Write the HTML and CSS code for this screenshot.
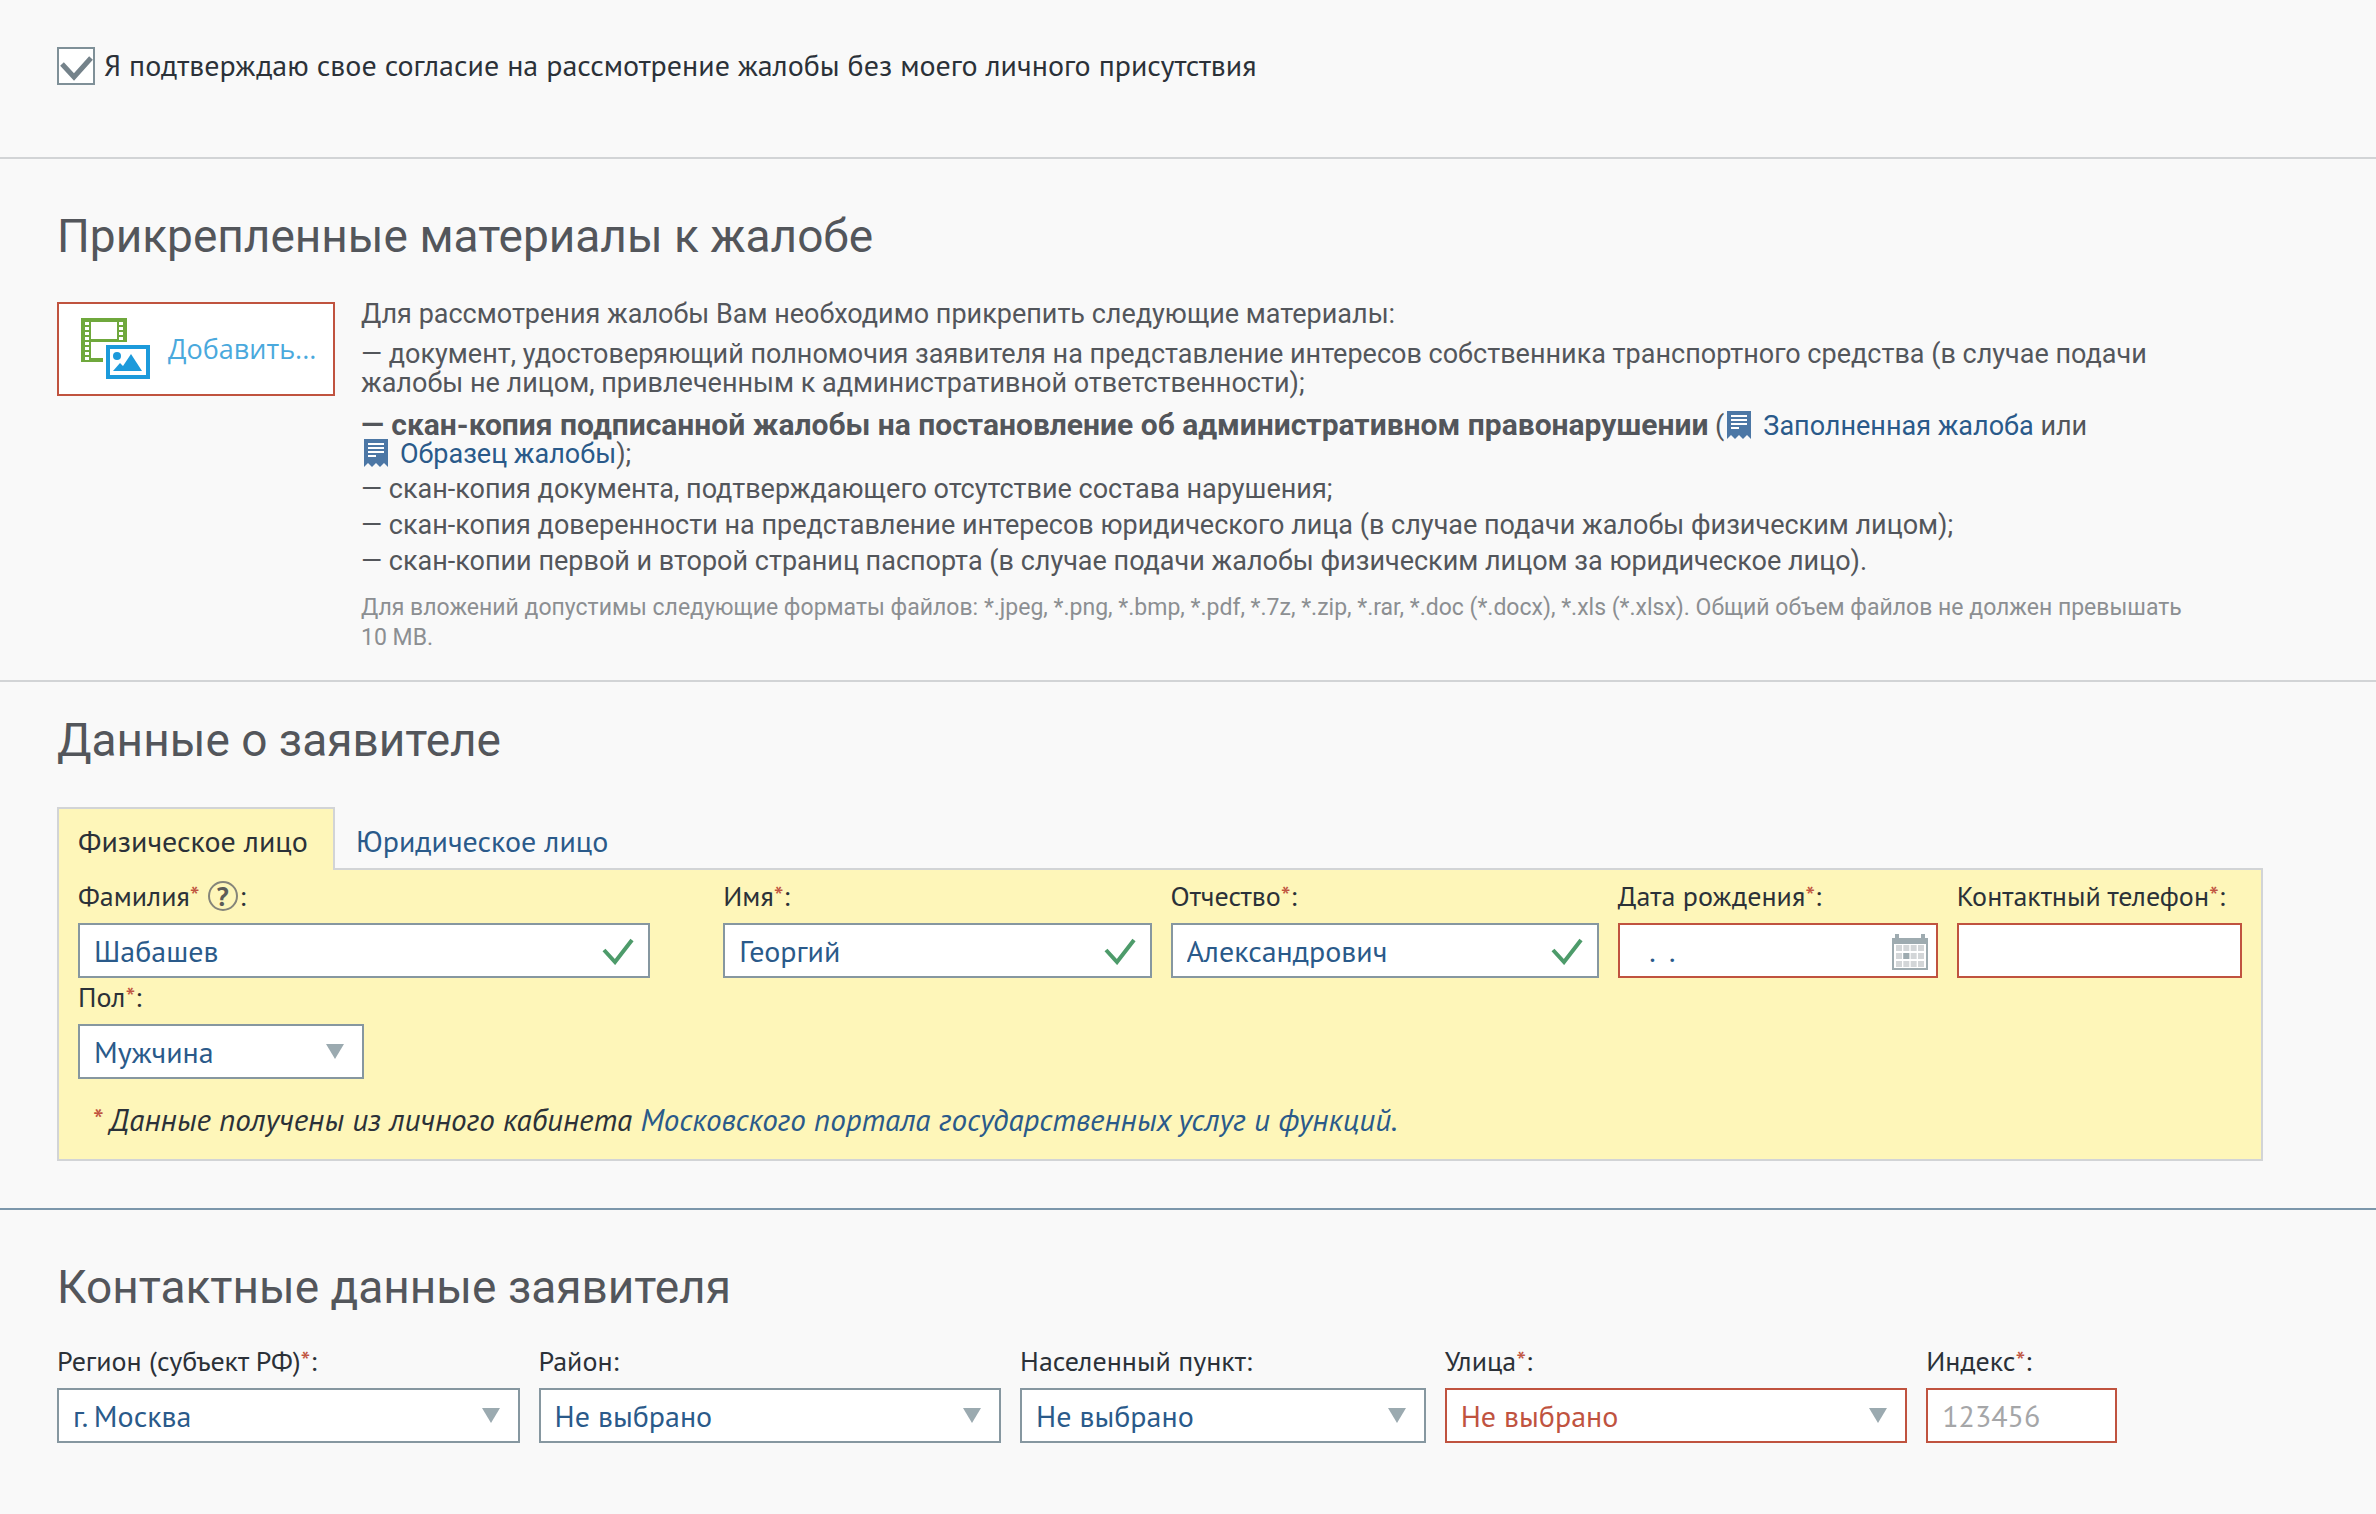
FILE: index.html
```html
<!DOCTYPE html>
<html lang="ru">
<head>
<meta charset="utf-8">
<meta name="viewport" content="width=device-width, initial-scale=1">
<title>Обжалование постановления</title>
<link rel="stylesheet" href="styles.css">
</head>
<body>
<svg class="sprite" aria-hidden="true">
  <symbol id="check" viewBox="0 0 32 28"><path d="M2 13 13 25 30 3" fill="none" stroke="currentColor" stroke-width="4"/></symbol>
  <symbol id="arrow" viewBox="0 0 18 15"><path d="M0 0H18L9 15Z" fill="currentColor"/></symbol>
  <symbol id="doc" viewBox="0 0 24 28">
    <path d="M0 0H24V28L20 24 16 28 12 24 8 28 4 24 0 28Z" fill="#4c77a5"/>
    <path d="M4 5H20M4 9H20M4 13H20M4 17H12" stroke="#fff" stroke-width="2"/>
  </symbol>
</svg>

<section class="section section-consent">
  <div class="consent">
    <span class="tick">
      <input class="tick-input" type="checkbox" id="consent" checked>
      <svg class="tick-mark" viewBox="0 0 38 38" aria-hidden="true"><path d="M5 17 17 30 34 11" fill="none" stroke="#74828a" stroke-width="5"/></svg>
    </span>
    <label for="consent">Я подтверждаю свое согласие на рассмотрение жалобы без моего личного присутствия</label>
  </div>
</section>

<section class="section section-files">
  <h2 class="title">Прикрепленные материалы к жалобе</h2>
  <div class="files">
    <button class="add" type="button">
      <svg class="add-icon" viewBox="0 0 69 62" aria-hidden="true">
        <path d="M0 0H46V26H24V44H0Z" fill="#6fa83c"/>
        <path d="M10 4H36V21H10ZM10 24H36V27H24V40H10Z" fill="#fff"/>
        <path d="M6 4V42M40 4V25" stroke="#fff" stroke-width="4" stroke-dasharray="3 2"/>
        <path d="M22 24H69V62H22Z" fill="#fff"/>
        <path d="M27 29H67V59H27Z" fill="#fff" stroke="#1c9adb" stroke-width="4"/>
        <circle cx="36" cy="38" r="4" fill="#1c9adb"/>
        <path d="M32 53 39 45 42 48 50 36 61 53Z" fill="#1c9adb"/>
      </svg>
      <span>Добавить...</span>
    </button>
    <div class="files-text">
      <p class="lead">Для рассмотрения жалобы Вам необходимо прикрепить следующие материалы:</p>
      <ul class="docs">
        <li>— документ, удостоверяющий полномочия заявителя на представление интересов собственника транспортного средства (в случае подачи жалобы не лицом, привлеченным к административной ответственности);</li>
        <li class="docs-main"><strong>— скан-копия подписанной жалобы на постановление об административном правонарушении</strong> (<a class="doc-link" href="#filled"><svg class="doc-icon" aria-hidden="true"><use href="#doc"/></svg>Заполненная жалоба</a> или <a class="doc-link" href="#sample"><svg class="doc-icon" aria-hidden="true"><use href="#doc"/></svg>Образец жалобы</a>);</li>
        <li>— скан-копия документа, подтверждающего отсутствие состава нарушения;</li>
        <li>— скан-копия доверенности на представление интересов юридического лица (в случае подачи жалобы физическим лицом);</li>
        <li>— скан-копии первой и второй страниц паспорта (в случае подачи жалобы физическим лицом за юридическое лицо).</li>
      </ul>
      <p class="hint">Для вложений допустимы следующие форматы файлов: *.jpeg, *.png, *.bmp, *.pdf, *.7z, *.zip, *.rar, *.doc (*.docx), *.xls (*.xlsx). Общий объем файлов не должен превышать 10&nbsp;MB.</p>
    </div>
  </div>
</section>

<section class="section section-person">
  <h2 class="title">Данные о заявителе</h2>
  <div class="tabs" role="tablist">
    <button class="tab tab-active" type="button" role="tab" aria-selected="true">Физическое лицо</button>
    <button class="tab" type="button" role="tab" aria-selected="false">Юридическое лицо</button>
  </div>
  <div class="panel">
    <div class="person-grid">
      <div class="field field-surname">
        <div class="label"><label for="surname">Фамилия<span class="req">*</span></label><button class="help" type="button" aria-label="Справка">?</button>:</div>
        <div class="control"><input class="input" id="surname" type="text" value="Шабашев"><svg class="ok" aria-hidden="true"><use href="#check"/></svg></div>
      </div>
      <div class="field">
        <label class="label" for="name">Имя<span class="req">*</span>:</label>
        <div class="control"><input class="input" id="name" type="text" value="Георгий"><svg class="ok" aria-hidden="true"><use href="#check"/></svg></div>
      </div>
      <div class="field">
        <label class="label" for="patronymic">Отчество<span class="req">*</span>:</label>
        <div class="control"><input class="input" id="patronymic" type="text" value="Александрович"><svg class="ok" aria-hidden="true"><use href="#check"/></svg></div>
      </div>
      <div class="field">
        <label class="label" for="birth">Дата рождения<span class="req">*</span>:</label>
        <div class="control"><input class="input input-error" id="birth" type="text" value="  .  .">
          <svg class="calendar" viewBox="0 0 36 36" aria-hidden="true">
            <path d="M5 0V6M31 0V6" stroke="#9eabb0" stroke-width="4"/>
            <path d="M1 5H35V35H1Z" fill="#fff" stroke="#9eabb0" stroke-width="2"/>
            <path d="M1 4H35V10H1Z" fill="#9eabb0"/>
            <path d="M4 14H32M4 22H32M4 30H32" stroke="#d3d6d8" stroke-width="6" stroke-dasharray="6 1.33"/>
            <path d="M11.3 19H17.3V25H11.3Z" fill="#9eabb0"/>
          </svg>
        </div>
      </div>
      <div class="field">
        <label class="label" for="phone">Контактный телефон<span class="req">*</span>:</label>
        <div class="control"><input class="input input-error" id="phone" type="tel"></div>
      </div>
      <div class="field field-sex">
        <label class="label" for="sex">Пол<span class="req">*</span>:</label>
        <div class="control"><select class="input" id="sex"><option>Мужчина</option><option>Женщина</option></select><svg class="arrow" aria-hidden="true"><use href="#arrow"/></svg></div>
      </div>
    </div>
    <p class="note"><span class="req">*</span> Данные получены из личного кабинета <a href="#portal">Московского портала государственных услуг и функций.</a></p>
  </div>
</section>

<section class="section section-contacts">
  <h2 class="title">Контактные данные заявителя</h2>
  <div class="contacts-grid">
    <div class="field">
      <label class="label" for="region">Регион (субъект РФ)<span class="req">*</span>:</label>
      <div class="control"><select class="input" id="region"><option>г. Москва</option></select><svg class="arrow" aria-hidden="true"><use href="#arrow"/></svg></div>
    </div>
    <div class="field">
      <label class="label" for="district">Район:</label>
      <div class="control"><select class="input" id="district"><option>Не выбрано</option></select><svg class="arrow" aria-hidden="true"><use href="#arrow"/></svg></div>
    </div>
    <div class="field">
      <label class="label" for="town">Населенный пункт:</label>
      <div class="control"><select class="input" id="town"><option>Не выбрано</option></select><svg class="arrow" aria-hidden="true"><use href="#arrow"/></svg></div>
    </div>
    <div class="field">
      <label class="label" for="street">Улица<span class="req">*</span>:</label>
      <div class="control"><select class="input input-error" id="street"><option>Не выбрано</option></select><svg class="arrow" aria-hidden="true"><use href="#arrow"/></svg></div>
    </div>
    <div class="field">
      <label class="label" for="zip">Индекс<span class="req">*</span>:</label>
      <div class="control"><input class="input input-error" id="zip" type="text" placeholder="123456"></div>
    </div>
  </div>
</section>
</body>
</html>
```
FILE: styles.css
```css
:root {
  --link: #2a5a8a;
  --error: #c0533f;
  --line: #d2d4d6;
  --ink: #2b3138;
  --soft: #53565b;
}

* { box-sizing: border-box; }

body {
  margin: 0;
  background: #f9f9f9;
  color: var(--ink);
  font: 30px/36px "PT Sans", "Open Sans", sans-serif;
}

button, input, select { font: inherit; border-radius: 0; }
h2, p, ul { margin: 0; padding: 0; }
a { color: var(--link); text-decoration: none; }
.sprite { display: none; }

.section {
  padding: 0 113px 0 57px;
  border-bottom: 2px solid var(--line);
}

.title {
  color: var(--soft);
  font: 400 46px/54px Roboto, sans-serif;
}

/* Consent */
.section-consent { padding-top: 47px; padding-bottom: 72px; }
.consent { display: flex; gap: 9px; }
.tick { position: relative; width: 38px; height: 38px; }
.tick-input {
  appearance: none;
  width: 38px;
  height: 38px;
  margin: 0;
  display: block;
  background: #fff;
  border: 2px solid #7f9098;
}
.tick-mark {
  position: absolute;
  inset: 0;
  pointer-events: none;
  visibility: hidden;
}
.tick-input:checked + .tick-mark { visibility: visible; }

/* Attachments */
.section-files { padding-top: 50px; padding-bottom: 27px; }
.files {
  display: flex;
  align-items: flex-start;
  gap: 26px;
  margin-top: 37px;
  padding-right: 63px;
}
.add {
  flex: none;
  display: flex;
  align-items: center;
  gap: 18px;
  width: 278px;
  height: 94px;
  margin-top: 2px;
  padding: 0 22px;
  background: #fff;
  border: 2px solid var(--error);
  color: #4aa9dd;
  font: 27px/36px "Open Sans", sans-serif;
}
.add-icon { flex: none; width: 69px; height: 62px; }

.files-text {
  flex: 1;
  color: var(--soft);
  font: 27px/29px Roboto, sans-serif;
}
.docs {
  display: flex;
  flex-direction: column;
  gap: 7px;
  margin-top: 11px;
  list-style: none;
}
.docs-main { margin-top: 6px; line-height: 28px; }
.docs-main strong { font-size: 30px; font-weight: 700; }
.doc-link { white-space: nowrap; }
.doc-icon {
  width: 24px;
  height: 28px;
  margin: -8px 12px -2px 3px;
  vertical-align: -2px;
}
.hint {
  margin-top: 17px;
  color: #8c8f92;
  font-size: 23px;
  line-height: 30px;
}

/* Applicant */
.section-person {
  padding-top: 31px;
  padding-bottom: 47px;
  border-bottom-color: #7c97ab;
}
.tabs { display: flex; margin-top: 40px; }
.tab {
  position: relative;
  margin-bottom: -2px;
  padding: 14px 25px 11px 19px;
  background: none;
  border: 2px solid transparent;
  border-bottom: 0;
  color: var(--link);
}
.tab-active {
  background: #fef6b9;
  border-color: var(--line);
  color: var(--ink);
}
.panel {
  padding: 9px 19px 21px;
  background: #fef6b9;
  border: 2px solid var(--line);
}
.person-grid {
  display: grid;
  grid-template-columns: 626fr 428fr 428fr 320fr 285fr;
  gap: 2px 19px;
}
.field-surname { margin-right: 54px; }
.field-sex { width: 286px; }
.note { margin: 23px 0 0 14px; font-size: 31px; font-style: italic; }

/* Fields */
.label {
  display: flex;
  align-items: center;
  margin-bottom: 10px;
  font-size: 28px;
  line-height: 34px;
  white-space: nowrap;
}
.req { color: var(--error); }
.help {
  width: 30px;
  height: 30px;
  margin: 0 2px 0 8px;
  padding: 0;
  background: none;
  border: 2px solid #85857a;
  border-radius: 50%;
  color: #5c5c58;
  font: 700 27px/26px "PT Sans", "Open Sans", sans-serif;
}
.control { position: relative; }
.input {
  appearance: none;
  display: block;
  width: 100%;
  height: 55px;
  padding: 0 14px;
  background: #fff;
  border: 2px solid #8697a0;
  color: var(--link);
}
.input-error { border-color: var(--error); }
select.input-error { color: var(--error); }
.input::placeholder { color: #a5a6a8; opacity: 1; }

.ok, .arrow, .calendar { position: absolute; pointer-events: none; }
.ok { top: 14px; right: 16px; width: 32px; height: 28px; color: #4d9b6a; }
.arrow { top: 20px; right: 20px; width: 18px; height: 15px; color: #9baab0; }
.calendar { top: 11px; right: 10px; width: 36px; height: 36px; }

/* Contacts */
.section-contacts { padding-top: 50px; padding-bottom: 60px; border-bottom: 0; }
.contacts-grid {
  display: grid;
  grid-template-columns: 463fr 463fr 406fr 463fr 191fr;
  gap: 19px;
  margin-top: 30px;
  padding-right: 146px;
}
```
